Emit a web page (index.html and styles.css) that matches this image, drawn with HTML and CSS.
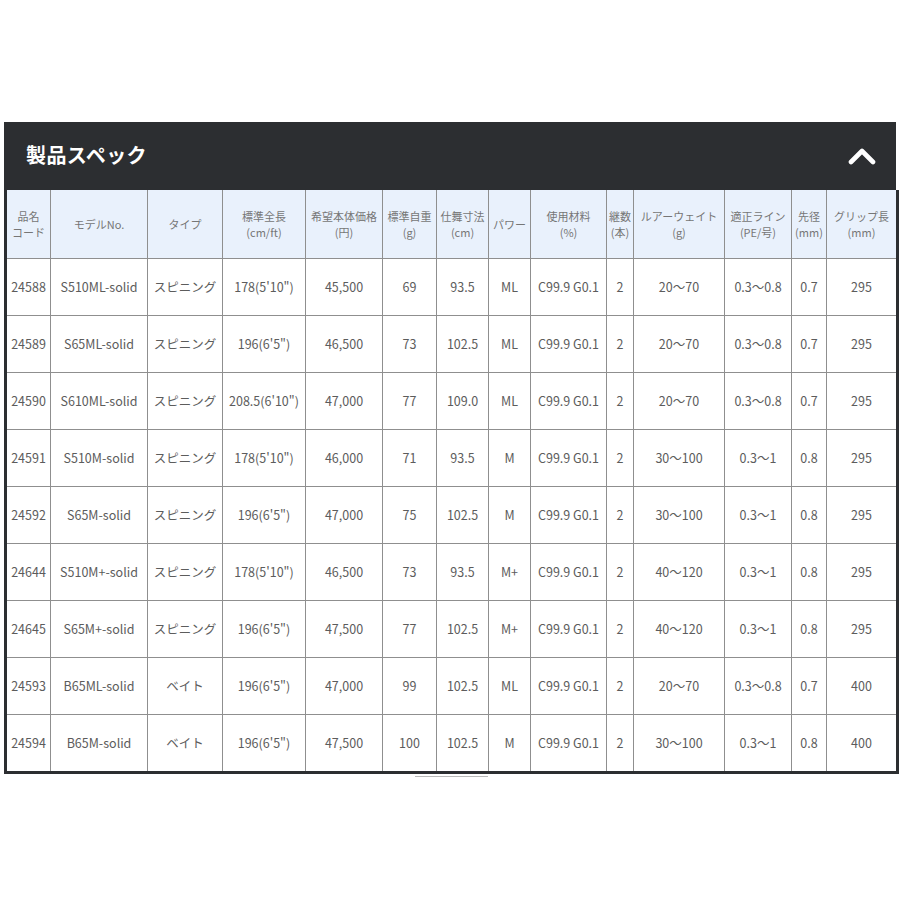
FILE: index.html
```html
<!DOCTYPE html>
<html lang="ja">
<head>
<meta charset="utf-8">
<title>製品スペック</title>
<link rel="stylesheet" href="styles.css">
</head>
<body>
<section class="spec">
  <div class="spec-head">
    <h2 class="spec-title">製品スペック</h2>
    <svg class="chev" width="30" height="18" viewBox="0 0 30 18"><polyline points="4,15 15,4 26,15" fill="none" stroke="#fff" stroke-width="4.6" stroke-linecap="round" stroke-linejoin="round"/></svg>
  </div>
  <table class="spec-table">
    <colgroup>
      <col class="w1"><col class="w2"><col class="w3"><col class="w4"><col class="w5"><col class="w6"><col class="w7"><col class="w8"><col class="w9"><col class="w10"><col class="w11"><col class="w12"><col class="w13"><col class="w14">
    </colgroup>
    <thead>
      <tr>
        <th>品名<br>コード</th>
        <th>モデルNo.</th>
        <th>タイプ</th>
        <th>標準全長<br>(cm/ft)</th>
        <th>希望本体価格<br>(円)</th>
        <th>標準自重<br>(g)</th>
        <th>仕舞寸法<br>(cm)</th>
        <th>パワー</th>
        <th>使用材料<br>(%)</th>
        <th>継数<br>(本)</th>
        <th>ルアーウェイト<br>(g)</th>
        <th>適正ライン<br>(PE/号)</th>
        <th>先径<br>(mm)</th>
        <th>グリップ長<br>(mm)</th>
      </tr>
    </thead>
    <tbody>
      <tr><td>24588</td><td>S510ML-solid</td><td>スピニング</td><td>178(5'10")</td><td>45,500</td><td>69</td><td>93.5</td><td>ML</td><td>C99.9 G0.1</td><td>2</td><td>20～70</td><td>0.3～0.8</td><td>0.7</td><td>295</td></tr>
      <tr><td>24589</td><td>S65ML-solid</td><td>スピニング</td><td>196(6'5")</td><td>46,500</td><td>73</td><td>102.5</td><td>ML</td><td>C99.9 G0.1</td><td>2</td><td>20～70</td><td>0.3～0.8</td><td>0.7</td><td>295</td></tr>
      <tr><td>24590</td><td>S610ML-solid</td><td>スピニング</td><td>208.5(6'10")</td><td>47,000</td><td>77</td><td>109.0</td><td>ML</td><td>C99.9 G0.1</td><td>2</td><td>20～70</td><td>0.3～0.8</td><td>0.7</td><td>295</td></tr>
      <tr><td>24591</td><td>S510M-solid</td><td>スピニング</td><td>178(5'10")</td><td>46,000</td><td>71</td><td>93.5</td><td>M</td><td>C99.9 G0.1</td><td>2</td><td>30～100</td><td>0.3～1</td><td>0.8</td><td>295</td></tr>
      <tr><td>24592</td><td>S65M-solid</td><td>スピニング</td><td>196(6'5")</td><td>47,000</td><td>75</td><td>102.5</td><td>M</td><td>C99.9 G0.1</td><td>2</td><td>30～100</td><td>0.3～1</td><td>0.8</td><td>295</td></tr>
      <tr><td>24644</td><td>S510M+-solid</td><td>スピニング</td><td>178(5'10")</td><td>46,500</td><td>73</td><td>93.5</td><td>M+</td><td>C99.9 G0.1</td><td>2</td><td>40～120</td><td>0.3～1</td><td>0.8</td><td>295</td></tr>
      <tr><td>24645</td><td>S65M+-solid</td><td>スピニング</td><td>196(6'5")</td><td>47,500</td><td>77</td><td>102.5</td><td>M+</td><td>C99.9 G0.1</td><td>2</td><td>40～120</td><td>0.3～1</td><td>0.8</td><td>295</td></tr>
      <tr><td>24593</td><td>B65ML-solid</td><td>ベイト</td><td>196(6'5")</td><td>47,000</td><td>99</td><td>102.5</td><td>ML</td><td>C99.9 G0.1</td><td>2</td><td>20～70</td><td>0.3～0.8</td><td>0.7</td><td>400</td></tr>
      <tr><td>24594</td><td>B65M-solid</td><td>ベイト</td><td>196(6'5")</td><td>47,500</td><td>100</td><td>102.5</td><td>M</td><td>C99.9 G0.1</td><td>2</td><td>30～100</td><td>0.3～1</td><td>0.8</td><td>400</td></tr>
    </tbody>
  </table>
  <div class="scroll-track"><div class="scroll-thumb"></div></div>
</section>
</body>
</html>
```

FILE: styles.css
```css
html, body {
  margin: 0;
  padding: 0;
  background: #fff;
}
body {
  font-family: "Noto Sans CJK JP", "Noto Sans", sans-serif;
  color: #555;
}
.spec {
  width: 892px;
  margin: 122px 0 0 4px;
}
.spec-head {
  height: 68px;
  background: #2c2e31;
  display: flex;
  align-items: center;
  justify-content: space-between;
  padding: 0 19px 3px 22px;
  box-sizing: border-box;
}
.spec-title {
  margin: 0;
  color: #fff;
  font-size: 20px;
  font-weight: 700;
  letter-spacing: 0.4px;
}
.chev {
  display: block;
  margin-top: 2px;
}
.spec-table {
  width: 892px;
  table-layout: fixed;
  border-collapse: collapse;
  border-left: 3px solid #2c2e31;
  border-right: 3px solid #2c2e31;
  border-bottom: 3px solid #2c2e31;
}
.w1 { width: 45px; }
.w2 { width: 97px; }
.w3 { width: 75px; }
.w4 { width: 83px; }
.w5 { width: 77px; }
.w6 { width: 54px; }
.w7 { width: 52px; }
.w8 { width: 42px; }
.w9 { width: 76px; }
.w10 { width: 27px; }
.w11 { width: 91px; }
.w12 { width: 67px; }
.w13 { width: 35px; }
.w14 { width: 71px; }
.spec-table th,
.spec-table td {
  border: 1px solid #8f8f8f;
  text-align: center;
  padding: 0;
  white-space: nowrap;
  overflow: hidden;
}
.spec-table th {
  height: 68px;
  background: #e9f1fc;
  color: #767676;
  font-size: 11px;
  font-weight: 400;
  line-height: 16px;
  border-top: none;
}
.spec-table td {
  height: 56px;
  color: #5c5c5c;
  font-size: 12.5px;
  line-height: 18px;
}
.scroll-track {
  display: flex;
  justify-content: flex-start;
  padding-left: 411px;
  margin-top: 2px;
}
.scroll-thumb {
  width: 73px;
  height: 1px;
  background: #b8b8b8;
}
```
